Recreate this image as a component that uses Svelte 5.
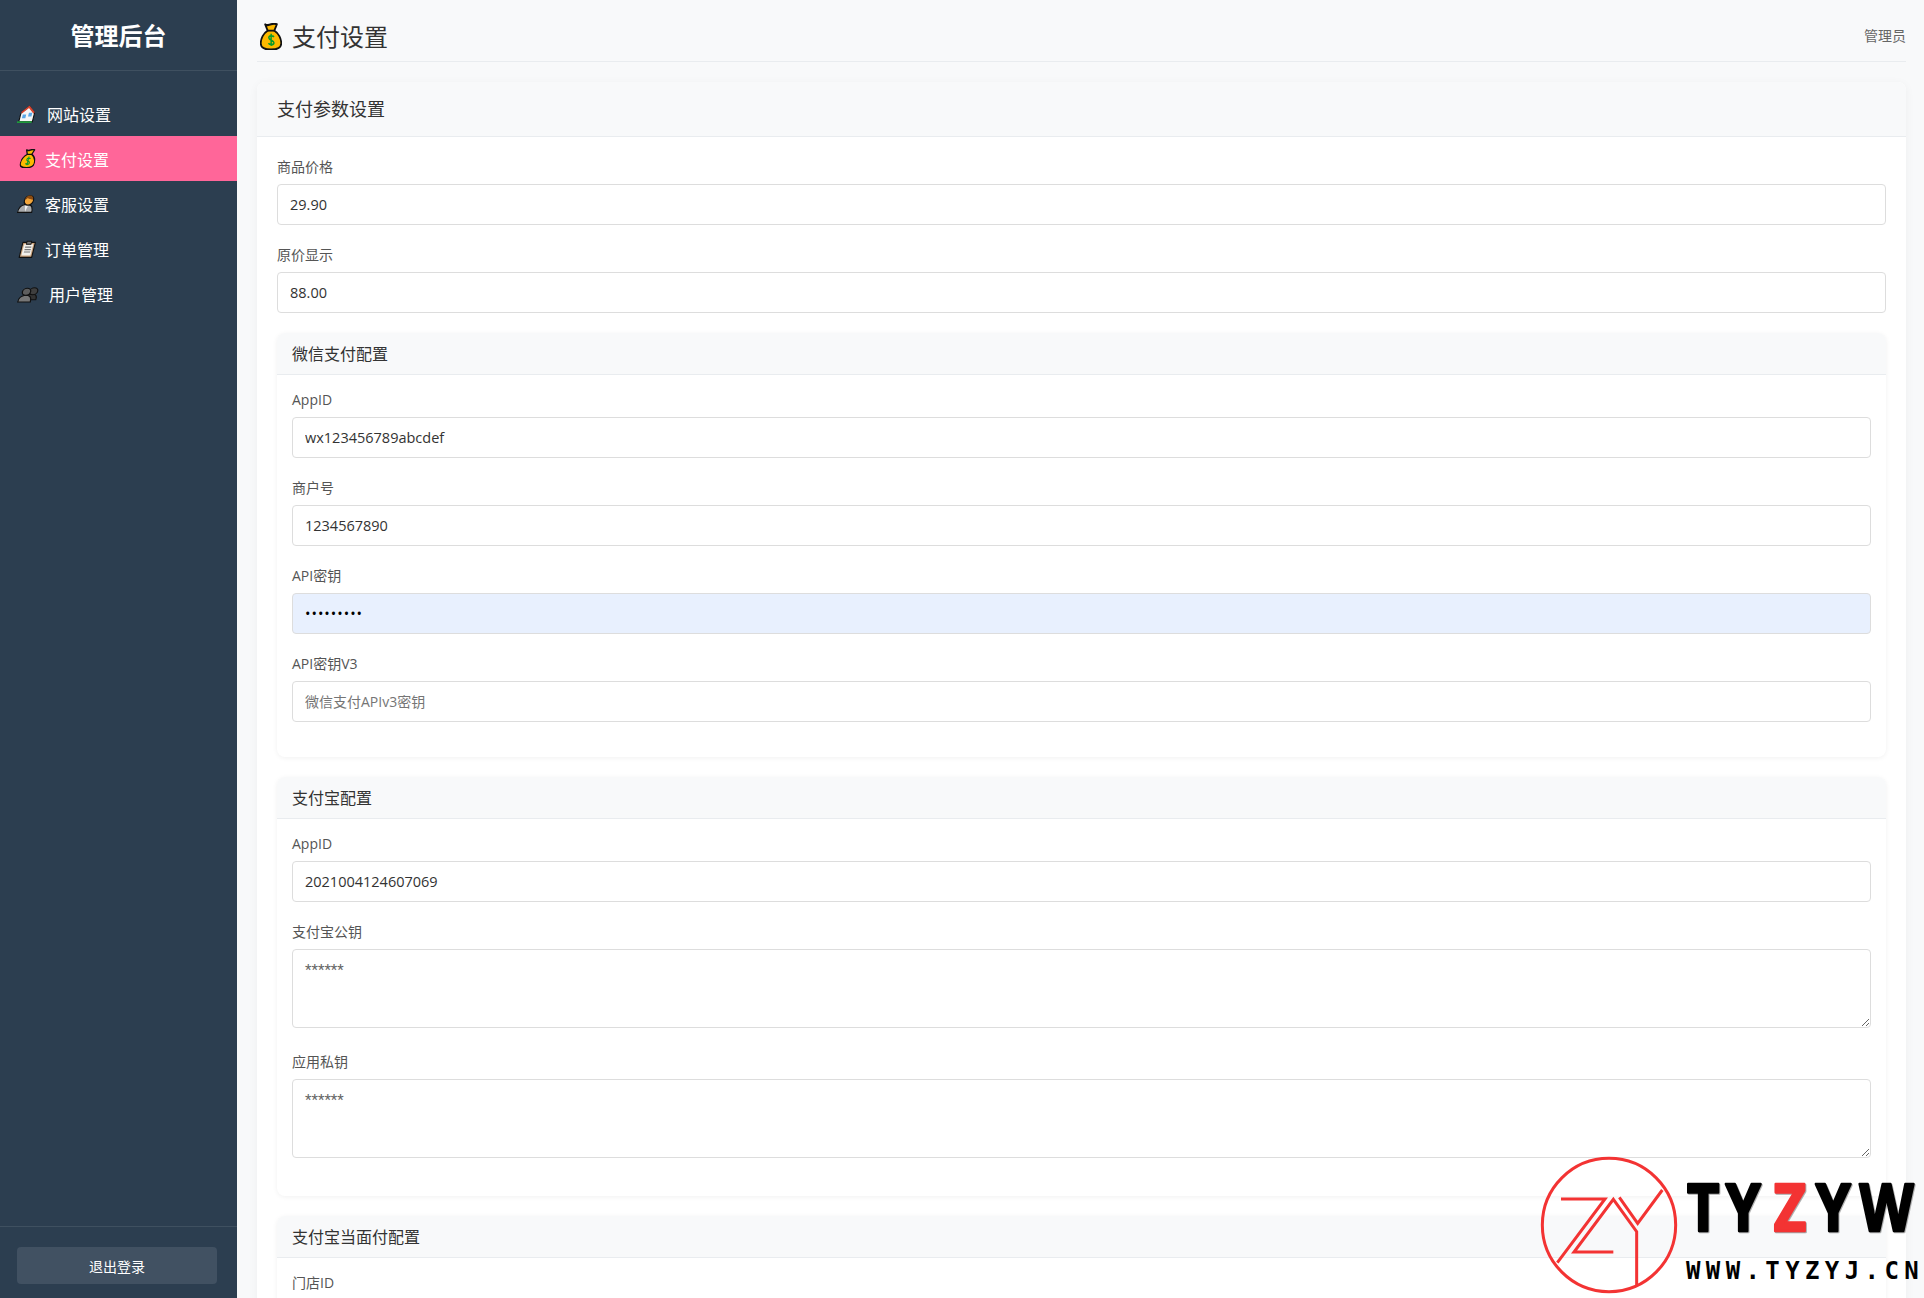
<script lang="ts">
  const nav = [
    { id: 'home', label: '网站设置' },
    { id: 'bag', label: '支付设置', active: true },
    { id: 'agent', label: '客服设置' },
    { id: 'clip', label: '订单管理' },
    { id: 'busts', label: '用户管理' }
  ];

  const wechat = [
    { label: 'AppID', value: 'wx123456789abcdef' },
    { label: '商户号', value: '1234567890' },
    { label: 'API密钥', value: '123456789', type: 'password', autofill: true },
    { label: 'API密钥V3', value: '', placeholder: '微信支付APIv3密钥' }
  ];
</script>

{#snippet icon(id: string)}
  <svg viewBox="1 1 30 30" preserveAspectRatio="none" width="100%" height="100%" aria-hidden="true">
    {#if id === 'bag'}
      <path d="M8 2.500c3 1.500 5 1 8 0s6-.8 8 0l-3.500 7c6 3 9.500 9 9.500 14 0 5.500-6 7-14 7s-14-1.500-14-7c0-5 3.500-11 9.500-14z" fill="#fdb900" stroke="#111" stroke-width="2.400" stroke-linejoin="round"/>
      <path d="M11 9.500h10" stroke="#111" stroke-width="2"/>
      <path d="M20 16.500c-1-1.500-7-2-7 1s7 2.500 7 5.500-6 2.500-7.500 .5M16.200 13v13.500" fill="none" stroke="#0a9a2a" stroke-width="2"/>
    {:else if id === 'home'}
      <path d="M4 29V15L16 3l12 12v14z" fill="#f6f6f6" stroke="#111" stroke-width="2" stroke-linejoin="round"/>
      <path d="M5 14 16 4l11 10" fill="none" stroke="#d8442f" stroke-width="3"/>
      <path d="M8 17h6v6H8zM18 14h6v6h-6z" fill="#5aa7e6"/>
      <path d="M1 29.500h26" stroke="#1e9a3c" stroke-width="3"/>
    {:else if id === 'agent'}
      <path d="M2 30c0-8 3-12 9-13h8c6 1 8 5 8 13z" fill="#a9abad" stroke="#111" stroke-width="2"/>
      <path d="M12 18l3 11 3-11" fill="#eee"/>
      <circle cx="17" cy="10" r="8" fill="#f2a53a" stroke="#111" stroke-width="2"/>
      <path d="M10 9c0-5 3-7 7-7s7 3 7 7c-3-1-8-1-10-3-1 1-2 2-4 3z" fill="#8a4b12"/>
    {:else if id === 'clip'}
      <path d="M5 5h22v25H5z" fill="#c9a27c" stroke="#111" stroke-width="2" stroke-linejoin="round"/>
      <path d="M8 8h16v19H8z" fill="#f3f1ec"/>
      <path d="M12 3h8v5h-8z" fill="#777" stroke="#111" stroke-width="1.500"/>
      <path d="M11 13h11M11 17h11M11 21h11" stroke="#777" stroke-width="2"/>
    {:else}
      <path d="M14 15h12c3 1 4 5 4 10H16z" fill="#333" stroke="#111" stroke-width="2"/>
      <circle cx="23" cy="9" r="6.500" fill="#3f3f3f" stroke="#111" stroke-width="2"/>
      <path d="M2 29c0-7 3-11 8-12h6c4 1 6 6 6 12z" fill="#777" stroke="#111" stroke-width="2"/>
      <circle cx="12" cy="10" r="6.500" fill="#5e5e5e" stroke="#111" stroke-width="2"/>
    {/if}
  </svg>
{/snippet}

<div class="layout">
  <aside class="sidebar">
    <div class="brand">管理后台</div>
    <nav class="nav">
      {#each nav as item (item.id)}
        <div class="nav-item {item.id}" class:active={item.active}>
          <span class="nav-icon">{@render icon(item.id)}</span>
          <span>{item.label}</span>
        </div>
      {/each}
    </nav>
    <div class="logout-wrap">
      <button class="logout">退出登录</button>
    </div>
  </aside>

  <main class="main">
    <header class="topbar">
      <h1><span class="title-icon">{@render icon('bag')}</span>支付设置</h1>
      <span class="user">管理员</span>
    </header>

    <section class="card">
      <div class="card-head">支付参数设置</div>
      <div class="card-body">
        <div class="group">
          <label for="price">商品价格</label>
          <input id="price" value="29.90" />
        </div>
        <div class="group">
          <label for="orig">原价显示</label>
          <input id="orig" value="88.00" />
        </div>

        <section class="sub">
          <div class="sub-head">微信支付配置</div>
          <div class="sub-body">
            {#each wechat as f (f.label)}
              <div class="group">
                <label for={f.label}>{f.label}</label>
                <input
                  id={f.label}
                  type={f.type ?? 'text'}
                  class:autofill={f.autofill}
                  value={f.value}
                  placeholder={f.placeholder}
                />
              </div>
            {/each}
          </div>
        </section>

        <section class="sub">
          <div class="sub-head">支付宝配置</div>
          <div class="sub-body">
            <div class="group">
              <label for="ali">AppID</label>
              <input id="ali" value="2021004124607069" />
            </div>
            <div class="group tall">
              <label for="pub">支付宝公钥</label>
              <textarea id="pub" placeholder="******"></textarea>
            </div>
            <div class="group tall">
              <label for="priv">应用私钥</label>
              <textarea id="priv" placeholder="******"></textarea>
            </div>
          </div>
        </section>

        <section class="sub">
          <div class="sub-head">支付宝当面付配置</div>
          <div class="sub-body">
            <div class="group">
              <label for="store">门店ID</label>
              <input id="store" />
            </div>
          </div>
        </section>
      </div>
    </section>
  </main>

  <svg class="watermark" viewBox="0 0 1272 474" aria-hidden="true">
    <g fill="none" stroke="#f33333" stroke-width="9">
      <circle cx="327" cy="255" r="200" />
      <path d="M183 177H315L172 368" />
      <path d="M340 336H222L340 178 410 275V435" />
      <path d="M358 172 413 250 487 150" />
    </g>
    <g class="wm-big" transform="translate(0 272) scale(.84 1)">
      <text x="726" y="0">T</text>
      <text x="869" y="0">Y</text>
      <text x="1036" y="0" fill="#f33333">Z</text>
      <text x="1190" y="0">Y</text>
      <text x="1381" y="0">W</text>
    </g>
    <text class="wm-small" x="558" y="416" textLength="698">WWW.TYZYJ.CN</text>
  </svg>
</div>

<style>
  :global(body) {
    overflow: hidden;
    background: #f8f9fa;
  }

  .layout {
    position: relative;
    display: flex;
    height: 1298px;
    overflow: hidden;
    font-family: "Open Sans", "Noto Sans CJK SC", sans-serif;
    font-size: 14px;
    color: #333;
  }

  .sidebar {
    flex: 0 0 237px;
    display: flex;
    flex-direction: column;
    background: #2c3e50;
    color: #fff;
  }

  .brand {
    padding: 20px 0 19px;
    border-bottom: 1px solid #3f5060;
    font-size: 24px;
    font-weight: 700;
    line-height: 31px;
    text-align: center;
  }

  .nav {
    padding-top: 20px;
  }

  .nav-item {
    display: flex;
    align-items: center;
    height: 45px;
    padding-left: 18px;
    font-size: 16px;
  }

  .nav-item.active {
    background: #ff6699;
  }

  .nav-icon {
    flex: 0 0 auto;
    width: 17px;
    height: 18px;
    margin: 0 9px 0 1px;
    transform: skewX(-14deg);
  }

  .home .nav-icon {
    margin-right: 11px;
  }

  .bag .nav-icon {
    width: 15px;
    height: 19px;
    margin: 0 9px 0 3px;
  }

  .busts .nav-icon {
    width: 19px;
    height: 16px;
    margin-right: 11px;
  }

  .logout-wrap {
    margin-top: auto;
    padding: 20px 20px 14px 17px;
    border-top: 1px solid #3f5060;
  }

  .logout {
    display: block;
    width: 100%;
    height: 37px;
    border: none;
    border-radius: 4px;
    background: #415162;
    color: #fff;
    font: inherit;
  }

  .main {
    flex: 1;
    min-width: 0;
    padding: 0 18px 0 20px;
  }

  .topbar {
    display: flex;
    justify-content: space-between;
    align-items: center;
    height: 61px;
    margin-bottom: 20px;
    border-bottom: 1px solid #e9ecef;
  }

  h1 {
    display: flex;
    align-items: center;
    margin: 12px 0 0;
    font-size: 24px;
    font-weight: 400;
    line-height: 31px;
  }

  .title-icon {
    width: 22px;
    height: 27px;
    margin: 0 10px 0 3px;
  }

  .user {
    margin-top: 9px;
    color: #666;
  }

  .card {
    border-radius: 8px;
    background: #fff;
    box-shadow: 0 2px 10px rgba(0, 0, 0, 0.05);
  }

  .card-head {
    height: 54px;
    padding: 0 20px;
    border-bottom: 1px solid #e9ecef;
    border-radius: 8px 8px 0 0;
    background: #f8f9fa;
    font-size: 18px;
    line-height: 55px;
  }

  .card-body {
    padding: 20px;
  }

  .group {
    margin-bottom: 20px;
  }

  .group.tall {
    margin-bottom: 24px;
  }

  .sub-body .group:last-child {
    margin-bottom: 0;
  }

  .sub-body .group.tall:last-child {
    margin-bottom: 3px;
  }

  label {
    display: block;
    height: 21px;
    margin-bottom: 6px;
    color: #555;
    line-height: 19px;
  }

  input,
  textarea {
    display: block;
    box-sizing: border-box;
    width: 100%;
    padding: 10px 12px;
    border: 1px solid #ddd;
    border-radius: 4px;
    background: #fff;
    color: #333;
    font: inherit;
    font-size: 14.5px;
    outline: none;
  }

  input::placeholder {
    font-size: 14px;
  }

  textarea::placeholder {
    color: #666;
    font-family: Roboto, sans-serif;
    font-size: 15px;
  }

  input {
    height: 41px;
  }

  input.autofill {
    background: #e8f0fe;
    color: #000;
    letter-spacing: 1px;
  }

  textarea {
    height: 79px;
    padding-top: 11px;
    line-height: 18px;
    resize: vertical;
  }

  .sub {
    margin-bottom: 20px;
    border-radius: 8px;
    background: #fff;
    box-shadow: 0 1px 5px rgba(0, 0, 0, 0.06);
  }

  .sub-head {
    height: 41px;
    padding: 0 15px;
    border-bottom: 1px solid #e9ecef;
    border-radius: 8px 8px 0 0;
    background: #f8f9fa;
    font-size: 16px;
    line-height: 42px;
  }

  .sub-body {
    padding: 15px 15px 35px;
  }

  .watermark {
    position: absolute;
    right: 0;
    bottom: 0;
    width: 424px;
    height: 158px;
  }

  .wm-big text {
    font-family: "Open Sans", sans-serif;
    font-size: 200px;
    font-weight: 700;
    text-anchor: middle;
    stroke: #000;
    stroke-width: 8;
    stroke-linejoin: round;
    filter: drop-shadow(3px 3px 2px rgba(0, 0, 0, 0.35));
  }

  .wm-big text[fill] {
    stroke: #f33333;
  }

  .wm-small {
    font-family: "DejaVu Sans Mono", monospace;
    font-size: 72px;
    font-weight: 700;
  }
</style>
